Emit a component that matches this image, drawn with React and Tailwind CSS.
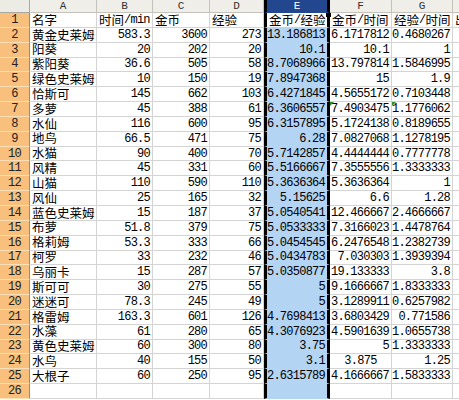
import React from "react";

const rows = [
  ["名字", "时间/min", "金币", "经验", "金币/经验", "金币/时间", "经验/时间"],
  ["黄金史莱姆", "583.3", "3600", "273", "13.186813", "6.1717812", "0.4680267"],
  ["阳葵", "20", "202", "20", "10.1", "10.1", "1"],
  ["紫阳葵", "36.6", "505", "58", "8.7068966", "13.797814", "1.5846995"],
  ["绿色史莱姆", "10", "150", "19", "7.8947368", "15", "1.9"],
  ["恰斯可", "145", "662", "103", "6.4271845", "4.5655172", "0.7103448"],
  ["多萝", "45", "388", "61", "6.3606557", "7.4903475", "1.1776062"],
  ["水仙", "116", "600", "95", "6.3157895", "5.1724138", "0.8189655"],
  ["地鸟", "66.5", "471", "75", "6.28", "7.0827068", "1.1278195"],
  ["水猫", "90", "400", "70", "5.7142857", "4.4444444", "0.7777778"],
  ["风精", "45", "331", "60", "5.5166667", "7.3555556", "1.3333333"],
  ["山猫", "110", "590", "110", "5.3636364", "5.3636364", "1"],
  ["风仙", "25", "165", "32", "5.15625", "6.6", "1.28"],
  ["蓝色史莱姆", "15", "187", "37", "5.0540541", "12.466667", "2.4666667"],
  ["布萝", "51.8", "379", "75", "5.0533333", "7.3166023", "1.4478764"],
  ["格莉姆", "53.3", "333", "66", "5.0454545", "6.2476548", "1.2382739"],
  ["柯罗", "33", "232", "46", "5.0434783", "7.030303", "1.3939394"],
  ["乌丽卡", "15", "287", "57", "5.0350877", "19.133333", "3.8"],
  ["斯可可", "30", "275", "55", "5", "9.1666667", "1.8333333"],
  ["迷迷可", "78.3", "245", "49", "5", "3.1289911", "0.6257982"],
  ["格雷姆", "163.3", "601", "126", "4.7698413", "3.6803429", "0.771586"],
  ["水藻", "61", "280", "65", "4.3076923", "4.5901639", "1.0655738"],
  ["黄色史莱姆", "60", "300", "80", "3.75", "5", "1.3333333"],
  ["水鸟", "40", "155", "50", "3.1", "3.875", "1.25"],
  ["大根子", "60", "250", "95", "2.6315789", "4.1666667", "1.5833333"],
  ["", "", "", "", "", "", ""],
];

const colW = ["w-[67px]", "w-[56px]", "w-[57px]", "w-[54px]", "w-[66px]", "w-[62px]", "w-[61px]", "w-[60px]"];
const letters = ["A", "B", "C", "D", "E", "F", "G", "H"];

const isCjk = (ch) => /[\u3000-\u9fff\uff00-\uffef]/.test(ch);

function Txt({ s }) {
  const runs = [];
  for (const ch of s) {
    const c = isCjk(ch);
    if (runs.length && runs[runs.length - 1].c === c) runs[runs.length - 1].t += ch;
    else runs.push({ c, t: ch });
  }
  return (
    <>
      {runs.map((r, i) =>
        r.c ? (
          <span key={i} className="font-['Noto_Sans_CJK_SC',sans-serif] text-[12.5px] leading-none">
            {r.t}
          </span>
        ) : (
          <span key={i} className="font-['Liberation_Mono',monospace] text-[12px] tracking-[-0.75px] leading-none">
            {r.t}
          </span>
        )
      )}
    </>
  );
}

const isNum = (s) => /^[0-9.]+$/.test(s);

export default function App() {
  return (
    <div className="w-[459px] h-[400px] overflow-hidden bg-white text-black relative">
      <div className="flex h-[13px]">
        <div className="w-[30px] shrink-0 h-full bg-[#ecebe4] border-r border-b border-[#a8a8a0]" />
        {letters.map((l, i) => (
          <div
            key={l}
            className={`${colW[i]} shrink-0 h-full flex items-center justify-center border-b font-['Liberation_Mono',monospace] text-[11px] leading-none ${
              i === 4
                ? "bg-[#23478f] text-white border-x-[3px] border-x-black border-b-[#23478f]"
                : "bg-[#efeee8] text-[#333] border-r border-[#c4c3bb]"
            }`}
          >
            {l}
          </div>
        ))}
      </div>
      {rows.map((r, ri) => (
        <div key={ri} className="flex h-[14.85px]">
          <div className="w-[30px] shrink-0 h-full flex items-center justify-center bg-[#f8c07c] border-r border-r-[#8c8c8c] border-b border-b-[#fbdfb6] font-['Liberation_Mono',monospace] text-[12px] tracking-[-0.6px] leading-none text-[#222]">
            {ri + 1}
          </div>
          {[...r, ri === 0 ? "出现" : ""].map((v, ci) => {
            const num = ri > 0 && isNum(v);
            const center = ri === 23 && ci === 5;
            const selE = ci === 4;
            const bg = selE ? (ri === 0 ? "bg-white" : "bg-[#b4d4f4]") : "bg-white";
            const border = selE
              ? "border-x-[3px] border-x-black border-b border-b-[#b4d4f4]"
              : "border-r border-b border-[#d4d4d4]";
            const align = center ? "justify-center" : num ? "justify-end pr-[2px]" : "justify-start pl-[2px]";
            return (
              <div
                key={ci}
                className={`${colW[ci]} shrink-0 h-full relative flex items-center whitespace-nowrap ${bg} ${border} ${align}`}
              >
                {ri === 6 && (ci === 5 || ci === 6) && (
                  <div className="absolute left-0 top-0 w-0 h-0 border-t-[4px] border-t-[#2e8b2e] border-r-[4px] border-r-transparent" />
                )}
                <Txt s={v} />
              </div>
            );
          })}
        </div>
      ))}
      <div className="absolute left-[326px] top-[13px] w-[5px] h-[4px] bg-black" />
    </div>
  );
}
